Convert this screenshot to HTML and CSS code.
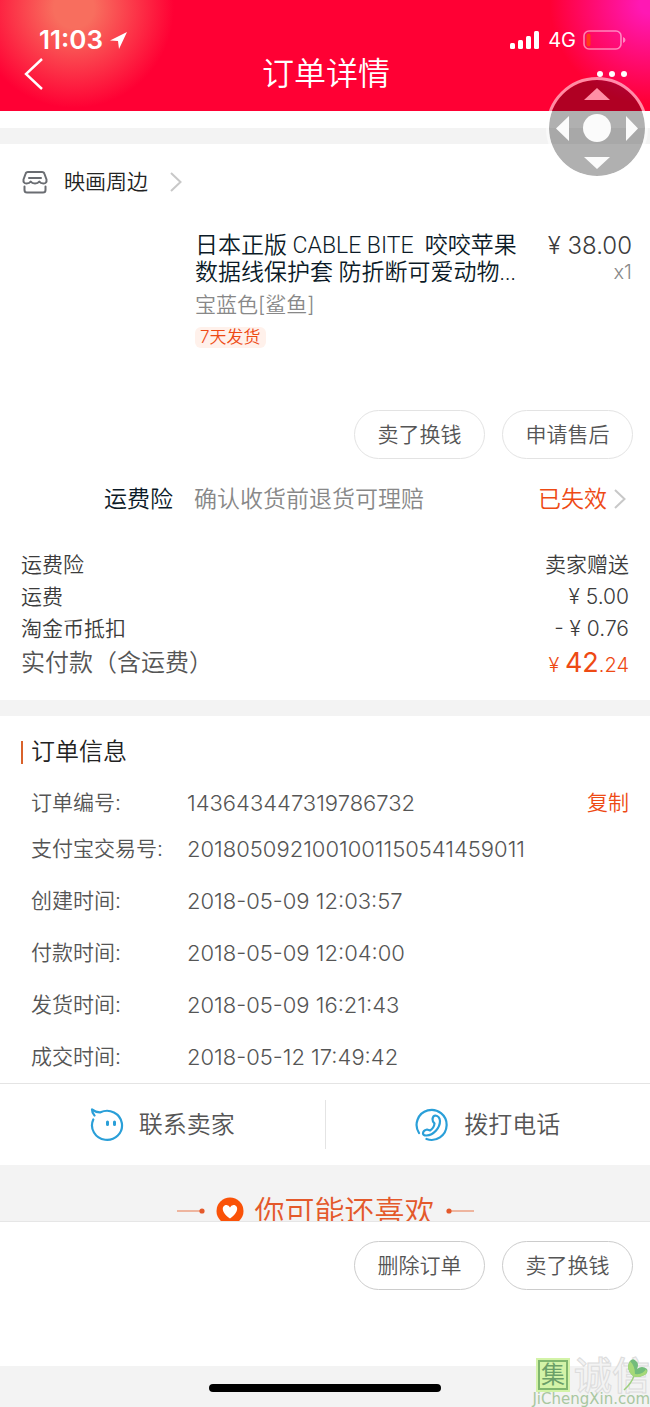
FILE: index.html
```html
<!DOCTYPE html>
<html lang="zh-CN">
<head>
<meta charset="utf-8">
<meta name="viewport" content="width=device-width, initial-scale=1">
<title>订单详情</title>
<link rel="stylesheet" href="styles.css">
</head>
<body>
<div class="page">
  <header class="header">
    <div class="status">
      <span class="clock">11:03</span>
      <svg class="locate" width="19" height="19" viewBox="0 0 19 19" aria-hidden="true"><path d="M18 1 1 9.500 9 10 10 18Z" fill="#fff"/></svg>
      <span class="spacer"></span>
      <svg width="30" height="19" viewBox="0 0 30 19" fill="#fff" aria-hidden="true"><rect x="0" y="12" width="5" height="6" rx="1.500"/><rect x="8" y="9" width="5" height="9" rx="1.500"/><rect x="16" y="5" width="5" height="13" rx="1.500"/><rect x="24" y="0" width="5" height="18" rx="1.500"/></svg>
      <span class="network">4G</span>
      <svg width="43" height="20" viewBox="0 0 43 20" aria-hidden="true"><rect x="1" y="1" width="37" height="18" rx="5" fill="none" stroke="#fff" stroke-opacity=".5" stroke-width="1.600"/><rect x="3.500" y="3.500" width="4" height="13" rx="2" fill="#ff3b18"/><path d="M40 7q2.500 1 2.500 3T40 13Z" fill="#fff" fill-opacity=".5"/></svg>
    </div>
    <div class="nav">
      <button class="nav-btn back" aria-label="返回"><svg width="20" height="34" viewBox="0 0 20 34"><path d="M18 2 2 17 18 32" fill="none" stroke="#fff" stroke-width="2.400"/></svg></button>
      <h1 class="nav-title">订单详情</h1>
      <button class="nav-btn more" aria-label="更多"><svg width="32" height="8" viewBox="0 0 32 8" fill="#fff"><circle cx="4" cy="4" r="3"/><circle cx="16" cy="4" r="3"/><circle cx="28" cy="4" r="3"/></svg></button>
    </div>
  </header>
  <div class="strip"></div>

  <section class="card order">
    <a class="shop" href="#shop">
      <svg width="26" height="24" viewBox="0 0 26 24" fill="none" stroke="#6a6d72" stroke-width="2" stroke-linejoin="round" stroke-linecap="round" aria-hidden="true"><path d="M6 2H20Q22 2 22.500 4L24.500 9.500Q25 13.500 21.500 13.500 18.500 13.500 17.300 11.500 16 13.500 13 13.500T8.700 11.500Q7.500 13.500 4.500 13.500 1 13.500 1.500 9.500L3.500 4Q4 2 6 2ZM7 8H19M2.500 16.500V20Q2.500 22.500 5 22.500H21Q23.500 22.500 23.500 20V16.500"/></svg>
      <span>映画周边</span>
      <svg class="chevron" width="12" height="20" viewBox="0 0 12 20"><path d="M1 1 10.500 10 1 19" fill="none" stroke="#c8c8c8" stroke-width="2"/></svg>
    </a>
    <div class="product">
      <div class="thumb"></div>
      <div class="info">
        <h2 class="name">日本正版 CABLE BITE&nbsp; 咬咬苹果<br>数据线保护套 防折断可爱动物...</h2>
        <p class="sku">宝蓝色[鲨鱼]</p>
        <span class="tag">7天发货</span>
      </div>
      <div class="price"><span>¥ 38.00</span><span class="qty">x1</span></div>
    </div>
    <div class="actions">
      <button class="pill">卖了换钱</button>
      <button class="pill">申请售后</button>
    </div>
    <a class="insurance" href="#insurance">
      <span class="ins-label">运费险</span>
      <span class="ins-desc">确认收货前退货可理赔</span>
      <span class="ins-state">已失效</span>
      <svg class="chevron" width="12" height="20" viewBox="0 0 12 20"><path d="M1 1 10.500 10 1 19" fill="none" stroke="#c8c8c8" stroke-width="2"/></svg>
    </a>
    <dl class="costs">
      <div class="cost"><dt>运费险</dt><dd>卖家赠送</dd></div>
      <div class="cost"><dt>运费</dt><dd>¥ 5.00</dd></div>
      <div class="cost"><dt>淘金币抵扣</dt><dd>- ¥ 0.76</dd></div>
      <div class="cost total"><dt>实付款（含运费）</dt><dd>¥ <strong>42</strong>.24</dd></div>
    </dl>
  </section>

  <section class="card details">
    <h2 class="details-title">订单信息</h2>
    <dl class="rows">
      <div class="row first"><dt>订单编号:</dt><dd>143643447319786732</dd><dd class="copy-cell"><button class="copy">复制</button></dd></div>
      <div class="row"><dt>支付宝交易号:</dt><dd>2018050921001001150541459011</dd></div>
      <div class="row"><dt>创建时间:</dt><dd>2018-05-09 12:03:57</dd></div>
      <div class="row"><dt>付款时间:</dt><dd>2018-05-09 12:04:00</dd></div>
      <div class="row"><dt>发货时间:</dt><dd>2018-05-09 16:21:43</dd></div>
      <div class="row"><dt>成交时间:</dt><dd>2018-05-12 17:49:42</dd></div>
    </dl>
    <div class="contact">
      <button class="contact-btn">
        <svg width="34" height="34" viewBox="0 0 34 34" fill="none" stroke="#2a9fd8" stroke-width="2.200" stroke-linecap="round" stroke-linejoin="round" aria-hidden="true"><path d="M3.300 11.500A15 14.500 0 1 0 10.500 4.300Q6 4.500 2 1.500 2 5 4.500 7.500"/><path d="M17.500 14V16.500M24.500 14V16.500" stroke-width="3"/></svg>
        <span>联系卖家</span>
      </button>
      <button class="contact-btn">
        <svg width="34" height="34" viewBox="0 0 34 34" fill="none" stroke="#2a9fd8" stroke-width="2.200" stroke-linecap="round" stroke-linejoin="round" aria-hidden="true"><path d="M4 25A15 15 0 1 1 11.500 31"/><path d="M20.500 7.500Q24.500 8 25 13C25 20 18.500 27 11.500 27.500Q8 27.500 8 25.500 8 22.500 12 21.500L15 22.500Q19 20 19.500 15.500 17.500 14 17.500 11 18 7.500 20.500 7.500Z"/></svg>
        <span>拨打电话</span>
      </button>
    </div>
  </section>

  <section class="suggest">
    <div class="suggest-head">
      <svg width="28" height="6" viewBox="0 0 28 6" aria-hidden="true"><path d="M0 3H25" stroke="#eda083" stroke-width="1.500"/><circle cx="25" cy="3" r="2.600" fill="#e4592b"/></svg>
      <svg width="28" height="28" viewBox="0 0 28 28" aria-hidden="true"><circle cx="14" cy="14" r="13.500" fill="#fa5208"/><path d="M14 21.500C4 14.500 6 8 10.500 8Q13 8 14 10.500 15 8 17.500 8C22 8 24 14.500 14 21.500Z" fill="#fff"/></svg>
      <h2 class="suggest-title">你可能还喜欢</h2>
      <svg width="28" height="6" viewBox="0 0 28 6" aria-hidden="true"><path d="M3 3H28" stroke="#eda083" stroke-width="1.500"/><circle cx="3" cy="3" r="2.600" fill="#e4592b"/></svg>
    </div>
  </section>

  <footer class="toolbar">
    <button class="pill strong">删除订单</button>
    <button class="pill strong">卖了换钱</button>
  </footer>
  <div class="home"><span class="home-bar"></span></div>

  <button class="assist" aria-label="方向控制">
    <svg width="104" height="104" viewBox="0 0 104 104"><circle cx="52" cy="52" r="48" fill="#000" fill-opacity=".31"/><circle cx="52" cy="52" r="49.500" fill="none" stroke="#fff" stroke-opacity=".55" stroke-width="3"/><circle cx="52" cy="52" r="14" fill="#fff" fill-opacity=".95"/><path d="M39 24 52 12 65 24Z" fill="#ff8fa5"/><path d="M39 81H65L52 93ZM24 40V65L11 52.500ZM81 40V65L93 52.500Z" fill="#fff" fill-opacity=".95"/></svg>
  </button>

  <div class="mark">
    <div class="mark-top">
      <span class="mark-box">集</span><span class="mark-name">诚信</span>
      <svg class="leaf" width="26" height="34" viewBox="0 0 26 34" aria-hidden="true"><path d="M11 18Q3 11 8 3 11-1 15 4 17 7 15 11 20 7 25 11 27 16 20 18 16 20 11 18Z" fill="#72bc7b"/><path d="M11 18Q3 11 8 3 13 8 13 16Q21 17 24 11 27 16 20 18 16 20 11 18Z" fill="#a6d978"/><path d="M12 18Q9 26 2 32" fill="none" stroke="#9ccf7d" stroke-width="1.500"/></svg>
    </div>
    <span class="mark-url">JiChengXin.com</span>
  </div>
</div>
</body>
</html>
```
FILE: styles.css
```css
* { box-sizing: border-box; }

body,
h1,
h2,
p,
dl,
dd {
  margin: 0;
}

body {
  background: #f3f3f3;
  color: #3c3c3c;
  font-family: Inter, "Noto Sans CJK SC", sans-serif;
  font-size: 21px;
  font-weight: 350;
  line-height: 32px;
}

h1,
h2 { font-weight: inherit; }

button {
  padding: 0;
  border: 0;
  background: none;
  color: inherit;
  font: inherit;
}

a {
  color: inherit;
  text-decoration: none;
}

svg {
  display: block;
  flex: none;
}

.page {
  position: relative;
  min-height: 100vh;
  overflow: hidden;
}

/* Header */
.header {
  padding: 26px 0 18px;
  background:
    radial-gradient(circle at 74px 8px, #f86e5e 20px, #f86e5e00 100px),
    radial-gradient(circle at 100% 4px, #ff18b4 10px, #ff18b400 100px),
    #ff0034;
  color: #fff;
}

.status {
  display: flex;
  align-items: center;
  height: 28px;
  padding: 0 24px 0 39px;
}

.clock {
  font-size: 26px;
  font-weight: 600;
}

.locate { margin-left: 6px; }

.spacer { flex: 1; }

.network {
  margin: 0 7px 0 8px;
  font-size: 20px;
  font-weight: 400;
}

.nav {
  display: grid;
  grid-template-columns: 1fr auto 1fr;
  align-items: center;
  height: 39px;
  padding: 0 22px 0 24px;
}

.nav-title {
  font-size: 32px;
  line-height: 38px;
}

.more { justify-self: end; }
.back { justify-self: start; }

.strip {
  height: 33px;
  border-bottom: 16px solid #f3f3f3;
  background: #fff;
}

/* Order card */
.card { background: #fff; }

.shop {
  display: flex;
  align-items: center;
  height: 76px;
  padding: 0 22px;
  color: #222;
}

.shop span { margin: 0 22px 0 16px; }

.product {
  display: grid;
  grid-template-columns: 156px 1fr auto;
  column-gap: 18px;
  padding: 12px 18px 0 21px;
}

.thumb { aspect-ratio: 1; }

.name {
  color: #0b1a27;
  font-family: Roboto, "Noto Sans CJK SC", sans-serif;
  font-size: 23px;
  line-height: 27px;
  white-space: nowrap;
}

.sku {
  color: #888;
  line-height: 38px;
}

.tag {
  display: inline-block;
  margin-top: 3px;
  padding: 0 5px;
  border-radius: 6px;
  background: #fff1eb;
  color: #ee4a14;
  font-size: 17px;
  line-height: 21px;
  vertical-align: top;
}

.price {
  display: flex;
  flex-direction: column;
  align-items: flex-end;
  font-size: 24px;
  line-height: 27px;
}

.qty {
  color: #888;
  font-size: 20px;
}

.actions {
  display: flex;
  justify-content: flex-end;
  gap: 17px;
  padding: 22px 17px 15px;
}

.pill {
  width: 131px;
  height: 49px;
  border: 1px solid #e3e3e3;
  border-radius: 25px;
  background: #fff;
  color: #555;
}

.strong { border-color: #ccc; }

.insurance {
  display: flex;
  align-items: center;
  height: 50px;
  padding: 0 24px 0 104px;
  font-size: 23px;
}

.ins-label { color: #0b1a27; }

.ins-desc {
  margin-left: 21px;
  color: #888;
}

.ins-state {
  margin: 0 7px 0 auto;
  color: #ee4a14;
}

.costs { padding: 25px 21px 19px; }

.cost {
  display: flex;
  justify-content: space-between;
}

.total {
  height: 36px;
  color: #555;
  font-size: 24px;
  line-height: 36px;
}

.total dd {
  color: #ee4a14;
  font-size: 20px;
}

.total strong {
  font-size: 27px;
  font-weight: 400;
}

/* Order details */
.details { margin-top: 16px; }

.details-title {
  display: flex;
  align-items: center;
  gap: 8px;
  height: 66px;
  padding: 6px 21px 0;
  color: #222;
  font-size: 24px;
}

.details-title::before {
  content: "";
  width: 2px;
  height: 23px;
  background: #d9622b;
}

.rows { color: #555; }

.row {
  display: grid;
  grid-template-columns: 156px 1fr auto;
  align-items: center;
  height: 52px;
  padding: 0 21px 0 31px;
}

.row dd { font-size: 22px; }

.first { height: 41px; }

.copy {
  color: #ee4a14;
  font-size: 21px;
}

.contact {
  display: flex;
  align-items: center;
  height: 82px;
  border-top: 1px solid #e4e4e4;
}

.contact-btn {
  display: flex;
  flex: 1;
  align-items: center;
  justify-content: center;
  gap: 15px;
  height: 49px;
  color: #555;
  font-size: 24px;
}

.contact-btn + .contact-btn { border-left: 1px solid #e4e4e4; }

/* Suggestions, cut off by the toolbar */
.suggest {
  height: 56px;
  padding-top: 26px;
  overflow: hidden;
}

.suggest-head {
  display: flex;
  align-items: center;
  justify-content: center;
  gap: 11px;
  height: 40px;
  color: #e4592b;
}

.suggest-title { font-size: 30px; }

/* Toolbar */
.toolbar {
  display: flex;
  justify-content: flex-end;
  gap: 17px;
  padding: 19px 17px 76px;
  border-top: 1px solid #e6e6e6;
  background: #fff;
}

.home {
  display: flex;
  justify-content: center;
  padding: 18px 0 14px;
}

.home-bar {
  width: 232px;
  height: 8px;
  border-radius: 4px;
  background: #000;
}

/* Floating control */
.assist {
  position: absolute;
  top: 76px;
  right: 1px;
}

/* Watermark */
.mark {
  position: absolute;
  right: 0;
  bottom: 0;
  display: flex;
  flex-direction: column;
  align-items: flex-end;
}

.mark-top {
  position: relative;
  display: flex;
  align-items: center;
  gap: 6px;
}

.mark-box {
  width: 30px;
  height: 30px;
  border: 2px solid #80b66e;
  outline: 2px solid #d3f3a8;
  background: #d3f3a8;
  color: #6b9f68;
  font-size: 24px;
  font-weight: 400;
  line-height: 25px;
  text-align: center;
}

.mark-name {
  color: #f3f3f3;
  font-size: 38px;
  font-weight: 500;
  line-height: 34px;
  -webkit-text-stroke: 1px #dcdcdc;
}

.leaf {
  position: absolute;
  top: 0;
  right: 2px;
}

.mark-url {
  color: #a9c7a0;
  font-family: "DejaVu Sans", sans-serif;
  font-size: 15px;
  font-weight: 400;
  line-height: 15px;
}
```
